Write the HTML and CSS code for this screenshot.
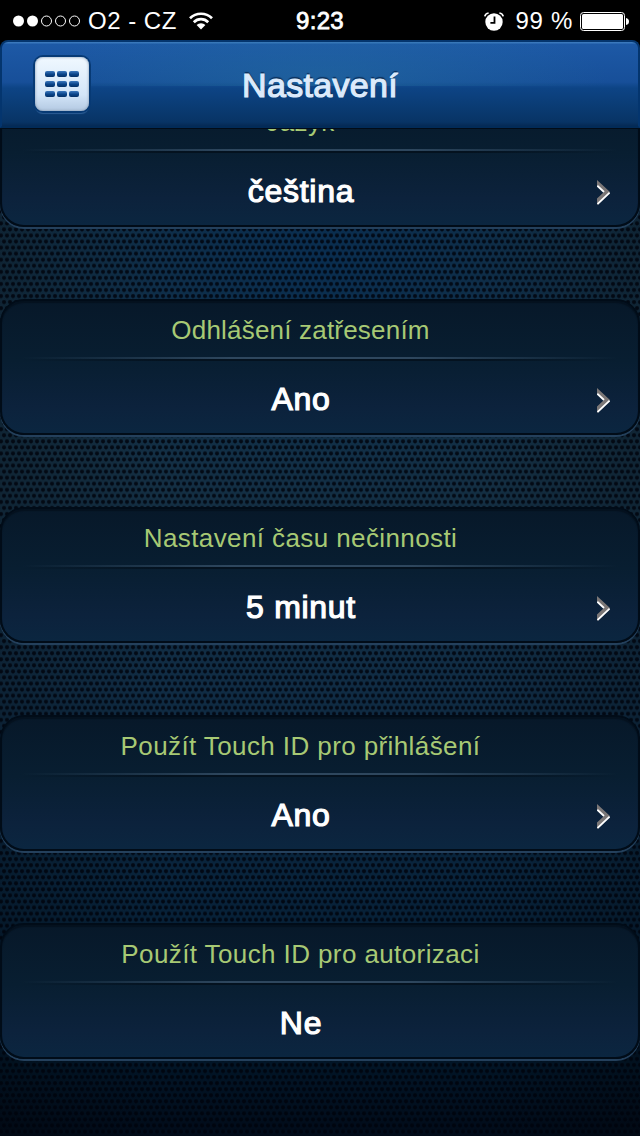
FILE: index.html
```
<!DOCTYPE html>
<html lang="cs">
<head>
    <meta charset="utf-8">
    <title>Nastavení</title>
    <link rel="stylesheet" href="styles.css">
</head>
<body>
    <div class="screen">
        <!-- Status bar -->
        <div class="status-bar">
            <div class="status-left">
                <svg class="signal" width="68" height="12" viewBox="0 0 68 12">
                    <g fill="#fff">
                        <circle cx="5.5" cy="6" r="5.5"/>
                        <circle cx="19.5" cy="6" r="5.5"/>
                    </g>
                    <g fill="none" stroke="#fff" stroke-width="1">
                        <circle cx="33.5" cy="6" r="5"/>
                        <circle cx="47.5" cy="6" r="5"/>
                        <circle cx="61.5" cy="6" r="5"/>
                    </g>
                </svg>
                <span class="carrier">O2 - CZ</span>
                <svg class="wifi" width="24" height="18" viewBox="0 0 24 18">
                    <g fill="none" stroke="#fff" stroke-width="2.7">
                        <path d="M1 6.3a15.6 15.6 0 0 1 22 0"/>
                        <path d="M4.8 10.2a10.2 10.2 0 0 1 14.4 0"/>
                    </g>
                    <path fill="#fff" d="M7.6 13.1a6.2 6.2 0 0 1 8.8 0L12 17.6z"/>
                </svg>
            </div>
            <span class="time">9:23</span>
            <div class="status-right">
                <svg class="alarm" width="20" height="19" viewBox="0 0 20 19">
                    <circle cx="10" cy="10" r="8.7" fill="#fff"/>
                    <path d="M.8 4.4Q1.4 1.4 4.6 1M19.2 4.4Q18.6 1.4 15.4 1" fill="none" stroke="#fff" stroke-width="1.7"/>
                    <path d="M10.5 4.5v6.3H6.4" fill="none" stroke="#000" stroke-width="1.8"/>
                </svg>
                <span class="percent">99 %</span>
                <svg class="battery" width="49" height="19" viewBox="0 0 49 19">
                    <rect x=".5" y=".5" width="44" height="18" rx="3" fill="none" stroke="#fff"/>
                    <rect x="2" y="2" width="41" height="15" rx="1.5" fill="#fff"/>
                    <path d="M46 6q3 .5 3 3.5t-3 3.5z" fill="#fff"/>
                </svg>
            </div>
        </div>

        <!-- Header -->
        <div class="header">
            <div class="menu-button">
                <div class="menu-grid">
                    <i></i><i></i><i></i>
                    <i></i><i></i><i></i>
                    <i></i><i></i><i></i>
                </div>
            </div>
            <h1>Nastavení</h1>
        </div>

        <!-- Settings list, scrolled down a little -->
        <div class="content">
            <div class="list">
                <div class="card">
                    <div class="label">Jazyk</div>
                    <div class="value">čeština
                        <svg class="arrow" width="13" height="25" viewBox="0 0 13 25"><path d="M0 0L13 12 0 25V18.5L7 12 0 5.5z" fill="#7b7777"/><path d="M.3 5.7L7 12M12.6 12.6L.5 24" fill="none" stroke="#fff" stroke-width="1.8"/></svg>
                    </div>
                </div>
                <div class="card">
                    <div class="label tight">Odhlášení zatřesením</div>
                    <div class="value">Ano
                        <svg class="arrow" width="13" height="25" viewBox="0 0 13 25"><path d="M0 0L13 12 0 25V18.5L7 12 0 5.5z" fill="#7b7777"/><path d="M.3 5.7L7 12M12.6 12.6L.5 24" fill="none" stroke="#fff" stroke-width="1.8"/></svg>
                    </div>
                </div>
                <div class="card">
                    <div class="label">Nastavení času nečinnosti</div>
                    <div class="value">5 minut
                        <svg class="arrow" width="13" height="25" viewBox="0 0 13 25"><path d="M0 0L13 12 0 25V18.5L7 12 0 5.5z" fill="#7b7777"/><path d="M.3 5.7L7 12M12.6 12.6L.5 24" fill="none" stroke="#fff" stroke-width="1.8"/></svg>
                    </div>
                </div>
                <div class="card">
                    <div class="label">Použít Touch ID pro přihlášení</div>
                    <div class="value">Ano
                        <svg class="arrow" width="13" height="25" viewBox="0 0 13 25"><path d="M0 0L13 12 0 25V18.5L7 12 0 5.5z" fill="#7b7777"/><path d="M.3 5.7L7 12M12.6 12.6L.5 24" fill="none" stroke="#fff" stroke-width="1.8"/></svg>
                    </div>
                </div>
                <div class="card">
                    <div class="label">Použít Touch ID pro autorizaci</div>
                    <div class="value">Ne</div>
                </div>
            </div>
        </div>
    </div>
</body>
</html>
```
FILE: styles.css
```
* { box-sizing: border-box; }
body { margin: 0; background: #000; font-family: "Liberation Sans", Arial, sans-serif; }
.screen { width: 640px; height: 1136px; overflow: hidden; display: flex; flex-direction: column; background: #000; }

/* Status bar */
.status-bar { height: 40px; flex: none; display: grid; grid-template-columns: 1fr auto 1fr; align-items: center; padding: 0 11px 0 13px; color: #fff; font-size: 24px; line-height: 42px; }
.status-left, .status-right { display: flex; align-items: center; height: 40px; }
.status-right { justify-content: flex-end; }
.carrier { margin-left: 7px; letter-spacing: 0.5px; }
.wifi { margin-left: 12px; }
.time { font-size: 24px; letter-spacing: 0.3px; -webkit-text-stroke: 0.8px #fff; margin-right: 2px; }
.percent { margin: 0 7px 0 11px; letter-spacing: 0.7px; }

/* Header */
.header {
    height: 88px; flex: none; display: grid; grid-template-columns: 1fr auto 1fr; align-items: center; padding: 0 33px;
    border: 2px solid #04356e; border-bottom-color: #022b58; border-radius: 8px 8px 0 0;
    background:
        radial-gradient(ellipse 290px 60px at 50% 36px, rgba(38, 115, 160, 0.45), transparent) no-repeat 0 0 / 100% 44px,
        linear-gradient(#3a78bc 0, #3a78bc 1px, #1d59a6 2px, #174f99 40px, #0d4485 46px, #083465 80px, #052a55 84px);
}
.menu-button {
    width: 54px; height: 54px; border-radius: 8px; display: flex; align-items: center; justify-content: center;
    background: linear-gradient(#f0f8ff, #d3e5f8 70%, #b3c9e2);
    box-shadow: 0 0 0 2px #073a75, inset 0 0 3px #8093aa, 0 3px 1px rgba(80, 130, 190, 0.5);
}
.menu-grid { display: grid; grid-template-columns: repeat(3, 10px); gap: 4px 2px; }
.menu-grid i { height: 6px; border-radius: 2px; background: linear-gradient(#3c78bd, #0a4489 55%, #063166); }
h1 { margin: 1px 0 0; font-size: 34px; line-height: 40px; font-weight: normal; color: #dceafb; -webkit-text-stroke: 1.2px #dceafb; text-shadow: 0 -2px 1px #0b2e59; letter-spacing: 0.3px; }

/* Perforated background */
.content {
    flex: 1; overflow: hidden; border-top: 1px solid #020c18;
    background:
        radial-gradient(circle at 3px 3px, rgba(0, 3, 12, 0.82) 1.4px, transparent 2.6px) -2px 6.6px / 6px 12.12px,
        radial-gradient(circle at 3px 3px, rgba(0, 3, 12, 0.82) 1.4px, transparent 2.6px) 1px 0.5px / 6px 12.12px,
        radial-gradient(ellipse 340px 260px at 50% 130px, rgba(4, 46, 88, 0.65), transparent),
        linear-gradient(90deg, rgba(0, 0, 0, 0.22), transparent 25%, transparent 75%, rgba(0, 0, 0, 0.22)),
        linear-gradient(#132d40 0, #142f43 350px, #102c44 560px, #08233b 760px, #021628 930px, #010b19);
}
.list { margin-top: -38px; display: flex; flex-direction: column; gap: 72px; }

/* Cards */
.card {
    height: 136px; flex: none; border: 2px solid #010c18; border-radius: 24px;
    background: linear-gradient(#071829, #081e31 45%, #0c223c 80%, #0b2640);
    box-shadow: 0 2px 0 #24405c, inset 0 2px 1px rgba(0, 8, 16, 0.4);
}
.label, .value { display: flex; align-items: center; justify-content: center; padding-right: 39px; white-space: nowrap; position: relative; }
.label { height: 60px; padding-bottom: 2px; color: #a7c974; font-size: 26px; letter-spacing: 0.4px; }
.label.tight { letter-spacing: 0.2px; }
.label::after {
    content: ""; position: absolute; left: 20px; right: 20px; bottom: 0; height: 4px;
    background: linear-gradient(90deg, transparent, #2e475e 35%, #2e475e 65%, transparent) 0 0 / 100% 2px no-repeat,
                linear-gradient(90deg, transparent, #04121f 25%, #04121f 75%, transparent) 0 2px / 100% 2px no-repeat;
}
.value { height: 72px; padding-top: 4px; padding-right: 38px; color: #fff; font-size: 32px; letter-spacing: 0.7px; -webkit-text-stroke: 1.2px #fff; }
.arrow { position: absolute; right: 28px; top: 27px; }
```
